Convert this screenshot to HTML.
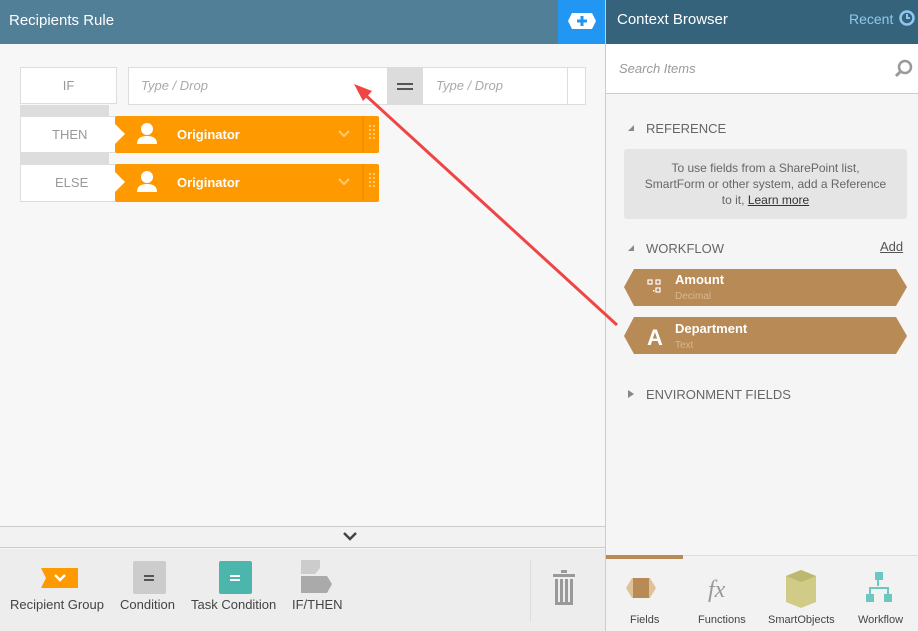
<!DOCTYPE html>
<html><head><meta charset="utf-8"><style>
*{margin:0;padding:0;box-sizing:border-box}
body{width:918px;height:631px;overflow:hidden;font-family:"Liberation Sans",sans-serif;background:#f7f7f7;position:relative}
.abs{position:absolute}
</style></head><body>
<div class="abs" style="left:0;top:0;width:558px;height:44px;background:#517f98"></div>
<div class="abs" style="left:9px;top:12px;color:#fff;font-size:15px">Recipients Rule</div>
<div class="abs" style="left:558px;top:0;width:47px;height:44px;background:#2196f3"></div>
<svg class="abs" style="left:568px;top:13px" width="28" height="16"><polygon points="4,0 24,0 28,8 24,16 4,16 0,8" fill="#fff"/><rect x="12.5" y="3" width="3" height="10" fill="#2196f3"/><rect x="9" y="6.5" width="10" height="3" fill="#2196f3"/></svg>
<div class="abs" style="left:0;top:44px;width:605px;height:482px;background:#f7f7f7"></div>
<div class="abs" style="left:20px;top:67px;width:97px;height:37px;background:#fff;border:1px solid #ddd;color:#999;font-size:13px;text-align:center;line-height:35px">IF</div>
<div class="abs" style="left:128px;top:67px;width:458px;height:38px;background:#fff;border:1px solid #ddd"></div>
<div class="abs" style="left:141px;top:78px;color:#aaa;font-size:13px;font-style:italic">Type / Drop</div>
<div class="abs" style="left:387px;top:68px;width:36px;height:36px;background:#dcdcdc"></div>
<div class="abs" style="left:397px;top:83px;width:16px;height:2px;background:#555"></div>
<div class="abs" style="left:397px;top:88px;width:16px;height:2px;background:#555"></div>
<div class="abs" style="left:436px;top:78px;color:#aaa;font-size:13px;font-style:italic">Type / Drop</div>
<div class="abs" style="left:567px;top:68px;width:1px;height:36px;background:#ddd"></div>
<div class="abs" style="left:20px;top:105px;width:89px;height:11px;background:#ddd"></div>
<div class="abs" style="left:20px;top:153px;width:89px;height:11px;background:#ddd"></div>
<div class="abs" style="left:20px;top:116px;width:97px;height:37px;background:#fff;border:1px solid #ddd;color:#999;font-size:13px;line-height:35px;padding-left:31px">THEN</div>
<div class="abs" style="left:115px;top:116px;width:264px;height:37px;background:#ff9900;border-radius:2px"></div>
<div class="abs" style="left:20px;top:164px;width:97px;height:38px;background:#fff;border:1px solid #ddd;color:#999;font-size:13px;line-height:36px;padding-left:34px">ELSE</div>
<div class="abs" style="left:115px;top:164px;width:264px;height:38px;background:#ff9900;border-radius:2px"></div>
<svg class="abs" style="left:115px;top:116px" width="265" height="86">
<g id="r"><polygon points="0,0 10,10 0,20" fill="#fff" transform="translate(0,8)"/>
<circle cx="32" cy="13" r="6" fill="#fff"/><path d="M22 28 Q22 20 32 20 Q42 20 42 28 Z" fill="#fff"/>
<path d="M224 15 l5 5 l5 -5" stroke="#ffc870" stroke-width="2" fill="none"/>
<line x1="248" y1="0" x2="248" y2="37" stroke="#e88800"/>
<g fill="#ffc870"><rect x="254" y="9" width="2" height="2"/><rect x="258" y="9" width="2" height="2"/><rect x="254" y="13" width="2" height="2"/><rect x="258" y="13" width="2" height="2"/><rect x="254" y="17" width="2" height="2"/><rect x="258" y="17" width="2" height="2"/><rect x="254" y="21" width="2" height="2"/><rect x="258" y="21" width="2" height="2"/></g></g>
<use href="#r" y="48"/>
</svg>
<div class="abs" style="left:177px;top:127px;color:#fff;font-size:13px;font-weight:bold">Originator</div>
<div class="abs" style="left:177px;top:175px;color:#fff;font-size:13px;font-weight:bold">Originator</div>
<div class="abs" style="left:0;top:526px;width:605px;height:1px;background:#ccc"></div>
<div class="abs" style="left:0;top:527px;width:605px;height:21px;background:#f2f2f2;border-bottom:1px solid #ccc"></div>
<svg class="abs" style="left:343px;top:531px" width="14" height="10"><path d="M1 2 l6 6 l6 -6" stroke="#444" stroke-width="2.5" fill="none"/></svg>
<div class="abs" style="left:0;top:549px;width:605px;height:82px;background:#ededed"></div>
<svg class="abs" style="left:40px;top:560px" width="300" height="36">
<polygon points="1,8 38,8 38,28 1,28 6,18" fill="#ff9900"/><path d="M15 15 l5 5 l5 -5" stroke="#fff" stroke-width="2.5" fill="none"/>
<rect x="93" y="1" width="33" height="33" rx="2" fill="#ccc"/><rect x="104" y="15" width="10" height="2" fill="#555"/><rect x="104" y="19" width="10" height="2" fill="#555"/>
<rect x="179" y="1" width="33" height="33" rx="2" fill="#4db6ac"/><rect x="190" y="15" width="10" height="2" fill="#fff"/><rect x="190" y="19" width="10" height="2" fill="#fff"/>
<polygon points="261,0 280,0 280,8 275,14 261,14" fill="#ccc"/><polygon points="261,16 287,16 292,24 287,33 261,33" fill="#aaa"/>
</svg>
<div class="abs" style="left:10px;top:597px;color:#444;font-size:13px">Recipient Group</div>
<div class="abs" style="left:120px;top:597px;color:#444;font-size:13px">Condition</div>
<div class="abs" style="left:191px;top:597px;color:#444;font-size:13px">Task Condition</div>
<div class="abs" style="left:292px;top:597px;color:#444;font-size:13px">IF/THEN</div>
<div class="abs" style="left:530px;top:560px;width:1px;height:62px;background:#ddd"></div>
<svg class="abs" style="left:552px;top:570px" width="24" height="36"><rect x="9" y="0" width="6" height="3" fill="#999"/><rect x="1" y="4" width="22" height="3" fill="#999"/><g fill="#999"><rect x="3" y="9" width="3" height="26"/><rect x="8" y="9" width="3" height="26"/><rect x="13" y="9" width="3" height="26"/><rect x="18" y="9" width="3" height="26"/><rect x="3" y="32" width="18" height="3"/></g></svg>
<div class="abs" style="left:605px;top:0;width:1px;height:631px;background:#ccc"></div>
<div class="abs" style="left:606px;top:0;width:312px;height:44px;background:#35637b"></div>
<div class="abs" style="left:617px;top:11px;color:#fff;font-size:15px">Context Browser</div>
<div class="abs" style="left:849px;top:11px;color:#8fc8ef;font-size:14px">Recent</div>
<svg class="abs" style="left:899px;top:10px" width="18" height="18"><circle cx="8" cy="8" r="6.5" stroke="#8fc8ef" stroke-width="2.5" fill="none"/><path d="M8 4 v4 h3" stroke="#8fc8ef" stroke-width="2" fill="none"/></svg>
<div class="abs" style="left:606px;top:44px;width:312px;height:50px;background:#fff;border-bottom:1px solid #ccc"></div>
<div class="abs" style="left:619px;top:61px;color:#999;font-size:13px;font-style:italic">Search Items</div>
<svg class="abs" style="left:894px;top:59px" width="20" height="20"><circle cx="11" cy="8" r="6" stroke="#999" stroke-width="2.5" fill="none"/><line x1="7" y1="12" x2="2" y2="17" stroke="#999" stroke-width="3"/></svg>
<div class="abs" style="left:606px;top:95px;width:312px;height:460px;background:#f5f5f5"></div>
<svg class="abs" style="left:627px;top:124px" width="8" height="8"><polygon points="7,1 7,7 1,7" fill="#888"/></svg>
<div class="abs" style="left:646px;top:121px;color:#666;font-size:13px">REFERENCE</div>
<div class="abs" style="left:624px;top:149px;width:283px;height:70px;background:#e5e5e5;border-radius:3px;color:#666;font-size:12px;text-align:center;line-height:16px;padding-top:11px">To use fields from a SharePoint list,<br>SmartForm or other system, add a Reference<br>to it, <u style="color:#333">Learn more</u></div>
<svg class="abs" style="left:627px;top:244px" width="8" height="8"><polygon points="7,1 7,7 1,7" fill="#888"/></svg>
<div class="abs" style="left:646px;top:241px;color:#666;font-size:13px">WORKFLOW</div>
<div class="abs" style="left:880px;top:239px;color:#555;font-size:13px;text-decoration:underline">Add</div>
<svg class="abs" style="left:624px;top:269px" width="284" height="86">
<polygon points="0,18 10,0 272,0 283,18 272,37 10,37" fill="#b78a56"/>
<polygon points="0,67 10,48 272,48 283,67 272,85 10,85" fill="#b78a56"/>
<g stroke="#fff" fill="none" stroke-width="1.2"><rect x="24" y="11" width="4" height="4"/><rect x="32" y="11" width="4" height="4"/><rect x="32" y="19" width="4" height="4"/></g>
<rect x="29" y="21" width="1.5" height="1.5" fill="#fff"/>
<text x="23" y="76" fill="#fff" font-family="Liberation Sans" font-weight="bold" font-size="22">A</text>
</svg>
<div class="abs" style="left:675px;top:272px;color:#fff;font-size:13px;font-weight:bold">Amount</div>
<div class="abs" style="left:675px;top:291px;color:#d8b78e;font-size:10px">Decimal</div>
<div class="abs" style="left:675px;top:321px;color:#fff;font-size:13px;font-weight:bold">Department</div>
<div class="abs" style="left:675px;top:340px;color:#d8b78e;font-size:10px">Text</div>
<svg class="abs" style="left:627px;top:389px" width="8" height="10"><polygon points="1,1 7,5 1,9" fill="#888"/></svg>
<div class="abs" style="left:646px;top:387px;color:#666;font-size:13px">ENVIRONMENT FIELDS</div>
<div class="abs" style="left:606px;top:555px;width:312px;height:76px;background:#f2f2f2;border-top:1px solid #ddd"></div>
<div class="abs" style="left:606px;top:555px;width:77px;height:4px;background:#b78a56"></div>
<svg class="abs" style="left:620px;top:570px" width="290" height="40">
<polygon points="6,18 12,8 30,8 36,18 30,28 12,28" fill="#e0c29a"/>
<rect x="13" y="8" width="16" height="20" fill="#b78a56"/>
<text x="88" y="27" font-family="Liberation Serif" font-style="italic" font-size="24" fill="#999">fx</text>
<polygon points="166,6 181,0 196,6 196,32 181,38 166,32" fill="#d0cc88"/><polygon points="166,6 181,12 196,6 181,0" fill="#bdb86f"/>
<g fill="#6cc7c0"><rect x="255" y="2" width="8" height="8"/><rect x="246" y="24" width="8" height="8"/><rect x="264" y="24" width="8" height="8"/><path d="M258 10 v6 M250 24 v-6 h18 v6" stroke="#6cc7c0" stroke-width="2" fill="none"/></g>
</svg>
<div class="abs" style="left:630px;top:614px;color:#444;font-size:11px">Fields</div>
<div class="abs" style="left:698px;top:614px;color:#444;font-size:11px">Functions</div>
<div class="abs" style="left:768px;top:614px;color:#444;font-size:11px">SmartObjects</div>
<div class="abs" style="left:858px;top:614px;color:#444;font-size:11px">Workflow</div>
<svg class="abs" style="left:0;top:0" width="918" height="631" pointer-events="none"><line x1="617" y1="325" x2="362" y2="92" stroke="#f04545" stroke-width="3"/><polygon points="354,84 372,91 363,101" fill="#f04545"/></svg>
</body></html>
